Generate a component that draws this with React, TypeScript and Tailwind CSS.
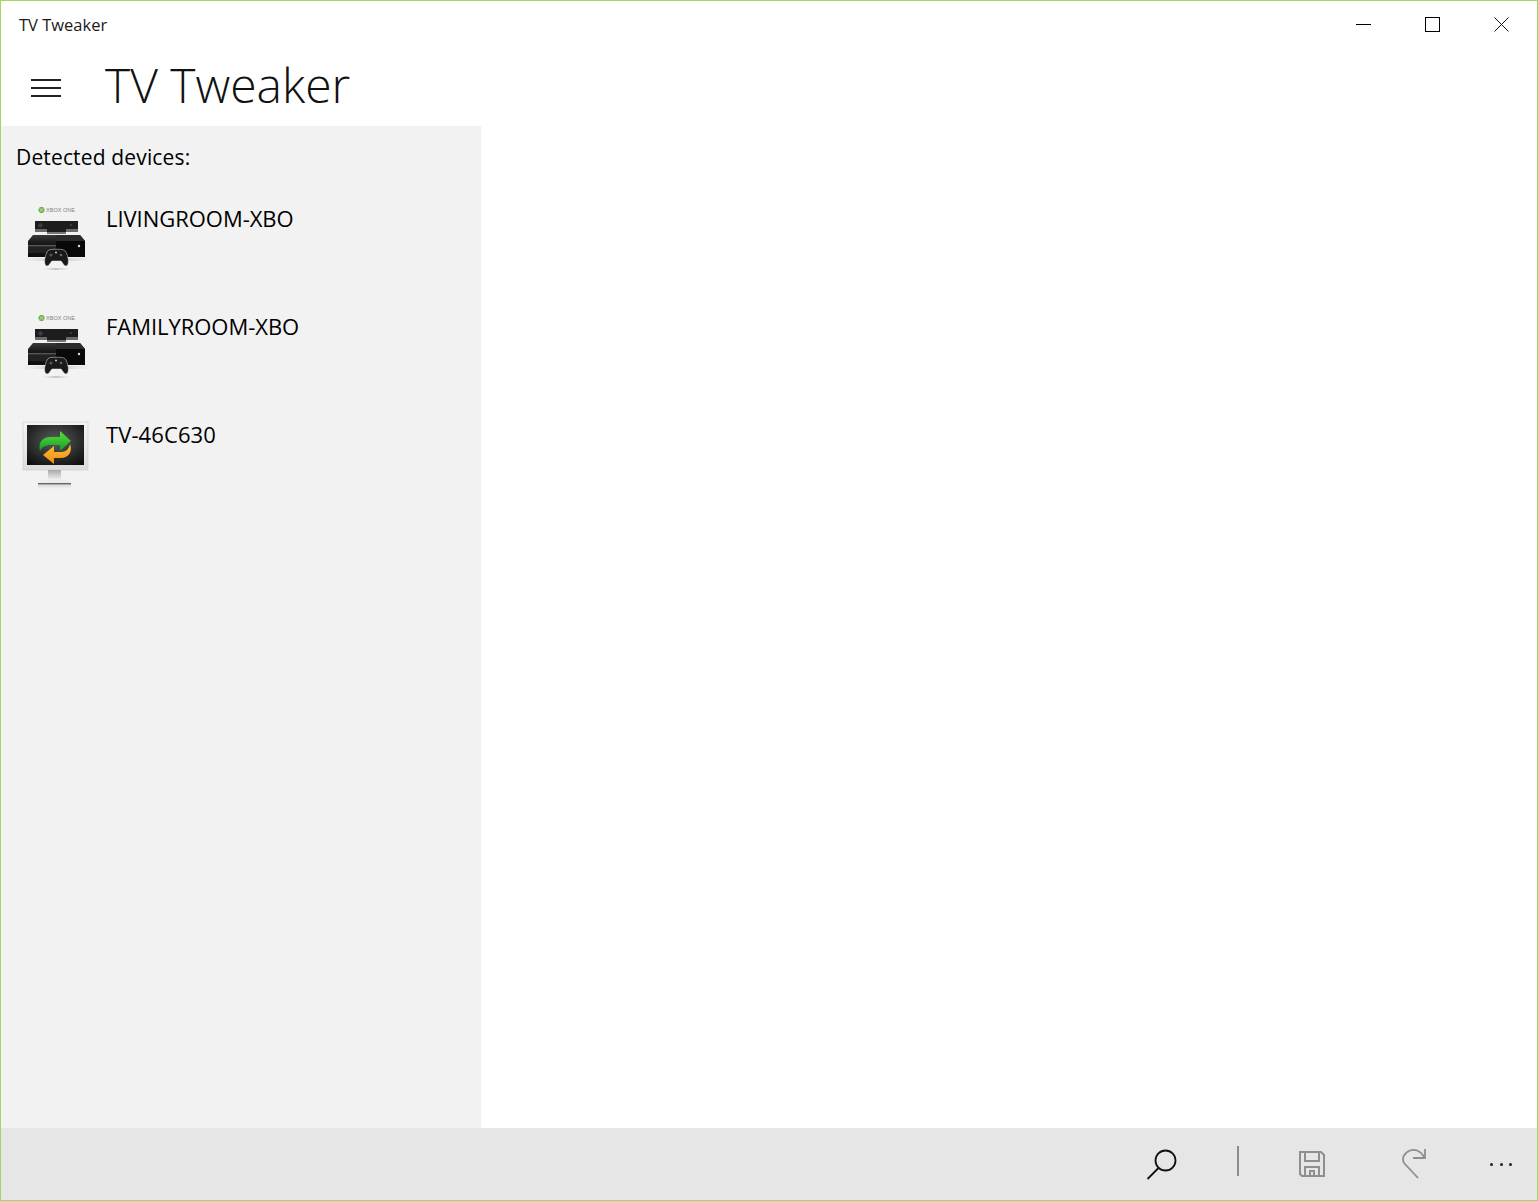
import React from "react";

function XboxIcon() {
  return (
    <svg width="70" height="72" viewBox="0 0 70 72" className="shrink-0">
      <defs>
        <linearGradient id="xbShadow" x1="0" x2="1" y1="0" y2="0">
          <stop offset="0" stopColor="#d4d4d4" stopOpacity="0" />
          <stop offset="0.5" stopColor="#c4c4c4" />
          <stop offset="1" stopColor="#d4d4d4" stopOpacity="0" />
        </linearGradient>
        <linearGradient id="xbBody" x1="0" x2="0" y1="0" y2="1">
          <stop offset="0" stopColor="#3a3a3a" />
          <stop offset="0.35" stopColor="#1a1a1a" />
          <stop offset="1" stopColor="#0c0c0c" />
        </linearGradient>
      </defs>
      {/* logo */}
      <circle cx="19.5" cy="10" r="3" fill="#5fa83c" />
      <path d="M17.5 8l4 4M21.5 8l-4 4" stroke="#e8f2df" strokeWidth="0.8" />
      <text x="24" y="12" fontSize="5.4" fontFamily="'Liberation Sans',sans-serif" fill="#7d857d" textLength="29" lengthAdjust="spacingAndGlyphs">XBOX ONE</text>
      {/* kinect */}
      <rect x="13" y="21" width="43" height="11" fill="#1d1d1d" />
      <circle cx="18.5" cy="25.5" r="2.2" fill="#3c3c3c" />
      <circle cx="49" cy="25" r="1" fill="#444" />
      <rect x="13" y="29" width="12" height="3" fill="#6a6a6a" />
      <rect x="44" y="29" width="12" height="3" fill="#6a6a6a" />
      <rect x="25" y="32" width="19" height="2" fill="#777" />
      {/* console */}
      <rect x="2" y="58" width="66" height="3" fill="url(#xbShadow)" />
      <path d="M11 35h47l5 6v16H6V41z" fill="url(#xbBody)" />
      <path d="M34 35h24l5 6H34z" fill="#2b2b2b" />
      <path d="M34 41h29v16H34z" fill="#090909" />
      <rect x="6" y="45" width="28" height="1.5" fill="#555" />
      <rect x="6" y="47" width="28" height="6" fill="#222" />
      <circle cx="57" cy="46" r="1.2" fill="#ddd" />
      {/* controller */}
      <rect x="20" y="68" width="28" height="2" fill="url(#xbShadow)" />
      <path d="M27 50c3-1 12-1 15 0 2 1 3 4 4 8 1 4 0 8-2 8-2 0-3-3-5-5h-9c-2 2-3 5-5 5-2 0-3-4-2-8 1-4 2-7 4-8z" fill="#1a1a1a" stroke="#e8e8e8" strokeWidth="0.5" />
      <circle cx="29" cy="55" r="1.6" fill="#555" />
      <circle cx="39" cy="55" r="1.3" fill="#666" />
      <circle cx="34" cy="52.5" r="1" fill="#ccc" />
    </svg>
  );
}

function MonitorIcon() {
  return (
    <svg width="70" height="72" viewBox="0 0 70 72" className="shrink-0 mt-[4px]">
      <defs>
        <radialGradient id="scr" cx="0.5" cy="0.4" r="0.75">
          <stop offset="0" stopColor="#5a5e5f" />
          <stop offset="0.7" stopColor="#222" />
          <stop offset="1" stopColor="#0b0b0b" />
        </radialGradient>
        <linearGradient id="bez" x1="0" x2="0" y1="0" y2="1">
          <stop offset="0" stopColor="#f4f4f4" />
          <stop offset="1" stopColor="#dcdcdc" />
        </linearGradient>
        <linearGradient id="neck" x1="0" x2="0" y1="0" y2="1">
          <stop offset="0" stopColor="#a8a8a8" />
          <stop offset="1" stopColor="#f2f2f2" />
        </linearGradient>
        <linearGradient id="refl" x1="0" x2="0" y1="0" y2="1">
          <stop offset="0" stopColor="#dcdcdc" />
          <stop offset="1" stopColor="#f2f2f2" />
        </linearGradient>
        <linearGradient id="grn" x1="0" x2="0" y1="0" y2="1">
          <stop offset="0" stopColor="#5ee23a" />
          <stop offset="1" stopColor="#129a28" />
        </linearGradient>
        <linearGradient id="org" x1="0" x2="0" y1="0" y2="1">
          <stop offset="0" stopColor="#ffc13a" />
          <stop offset="1" stopColor="#f28a12" />
        </linearGradient>
      </defs>
      <rect x="1" y="2" width="65" height="48" fill="url(#bez)" stroke="#c9c9c9" strokeWidth="0.6" />
      <rect x="5" y="5" width="57" height="40" fill="url(#scr)" />
      <path d="M18 31c-2-9 3-14 10-14h10v-6l11 10-11 10v-6H29c-5 0-9 2-11 6z" fill="url(#grn)" />
      <path d="M48 24c3 8-2 14-9 14h-7v6L21 35l11-9v6h7c5 0 8-3 9-8z" fill="url(#org)" />
      <rect x="26" y="50" width="13" height="10" fill="url(#neck)" />
      <path d="M20 60h25l4 4H16z" fill="#ececec" />
      <rect x="16" y="63" width="33" height="1.5" fill="#666" />
      <rect x="16" y="65" width="33" height="4" fill="url(#refl)" />
    </svg>
  );
}

const devices = [
  { name: "LIVINGROOM-XBO", icon: <XboxIcon /> },
  { name: "FAMILYROOM-XBO", icon: <XboxIcon /> },
  { name: "TV-46C630", icon: <MonitorIcon /> },
];

export default function App() {
  return (
    <div className="w-[1538px] h-[1201px] flex flex-col border border-[#a4d65e] bg-white text-black font-['Open_Sans','Noto_Sans',sans-serif] overflow-hidden">
      {/* title bar */}
      <div className="h-[47px] flex items-center justify-between shrink-0">
        <span className="ml-[18px] text-[16.5px] leading-[47px] text-[#1a1a1a]">TV Tweaker</span>
        <div className="flex items-center">
          <div className="w-[69px] h-[47px] flex items-center justify-center">
            <div className="w-[15px] h-px bg-black" />
          </div>
          <div className="w-[69px] h-[47px] flex items-center justify-center">
            <div className="w-[15px] h-[15px] border border-black" />
          </div>
          <div className="w-[70px] h-[47px] flex items-center justify-center">
            <svg width="15" height="15" viewBox="0 0 15 15" className="-ml-[1px]">
              <path d="M.5.5l14 14M14.5.5l-14 14" stroke="#111" strokeWidth="1" fill="none" />
            </svg>
          </div>
        </div>
      </div>

      {/* page header */}
      <div className="h-[78px] flex items-center shrink-0">
        <div className="ml-[30px] w-[30px] flex flex-col gap-[6px] mt-[1px]">
          <div className="h-[2px] bg-[#222]" />
          <div className="h-[2px] bg-[#222]" />
          <div className="h-[2px] bg-[#222]" />
        </div>
        <h1 className="ml-[44px] -mt-[5px] text-[48px] font-light leading-none text-[#111]">TV Tweaker</h1>
      </div>

      {/* body */}
      <div className="flex-1 flex min-h-0">
        <div className="w-[480px] bg-[#f2f2f2] pt-[17px]">
          <p className="ml-[15px] text-[21px] leading-[28px] tracking-[0.15px]">Detected devices:</p>
          <div className="mt-[29px] ml-[21px] flex flex-col">
            {devices.map((d) => (
              <div key={d.name} className="h-[108px] flex items-start">
                {d.icon}
                <span className={d.name === "TV-46C630" ? "ml-[14px] mt-[4px] text-[22px] leading-[28px] tracking-[0.1px]" : "ml-[14px] mt-[4px] text-[22px] leading-[28px] tracking-[-0.04px]"}>{d.name}</span>
              </div>
            ))}
          </div>
        </div>
        <div className="flex-1 bg-white" />
      </div>

      {/* command bar */}
      <div className="h-[72px] bg-[#e6e6e6] shrink-0 flex items-center justify-end">
        <svg width="32" height="32" viewBox="0 0 32 32" className="mr-[59px]">
          <circle cx="19.5" cy="12.5" r="10" fill="none" stroke="#111" strokeWidth="1.8" />
          <path d="M12.5 20L1.5 31" stroke="#111" strokeWidth="1.8" fill="none" />
        </svg>
        <div className="w-[2px] h-[30px] bg-[#8c8c8c] mr-[59px] mb-[6px]" />
        <svg width="28" height="28" viewBox="0 0 28 28" className="mr-[75px]">
          <path d="M2 2h21l3 3v21H4l-2-2z" fill="none" stroke="#8f8f8f" strokeWidth="2" />
          <path d="M7 2v9h14V2M7 26v-9h14v9M12 26v-5h4v5" fill="none" stroke="#8f8f8f" strokeWidth="2" />
        </svg>
        <svg width="26" height="32" viewBox="0 0 26 32" className="mr-[63px]">
          <path d="M24 1v9H12" fill="none" stroke="#8f8f8f" strokeWidth="1.8" />
          <path d="M23 9C20 3 14 .5 9 2.5 3 5 .5 10 3 15L17 30" fill="none" stroke="#8f8f8f" strokeWidth="1.8" />
        </svg>
        <div className="flex gap-[6.5px] mr-[25px] mt-[1px]">
          <div className="w-[3px] h-[3px] rounded-full bg-[#222]" />
          <div className="w-[3px] h-[3px] rounded-full bg-[#222]" />
          <div className="w-[3px] h-[3px] rounded-full bg-[#222]" />
        </div>
      </div>
    </div>
  );
}
